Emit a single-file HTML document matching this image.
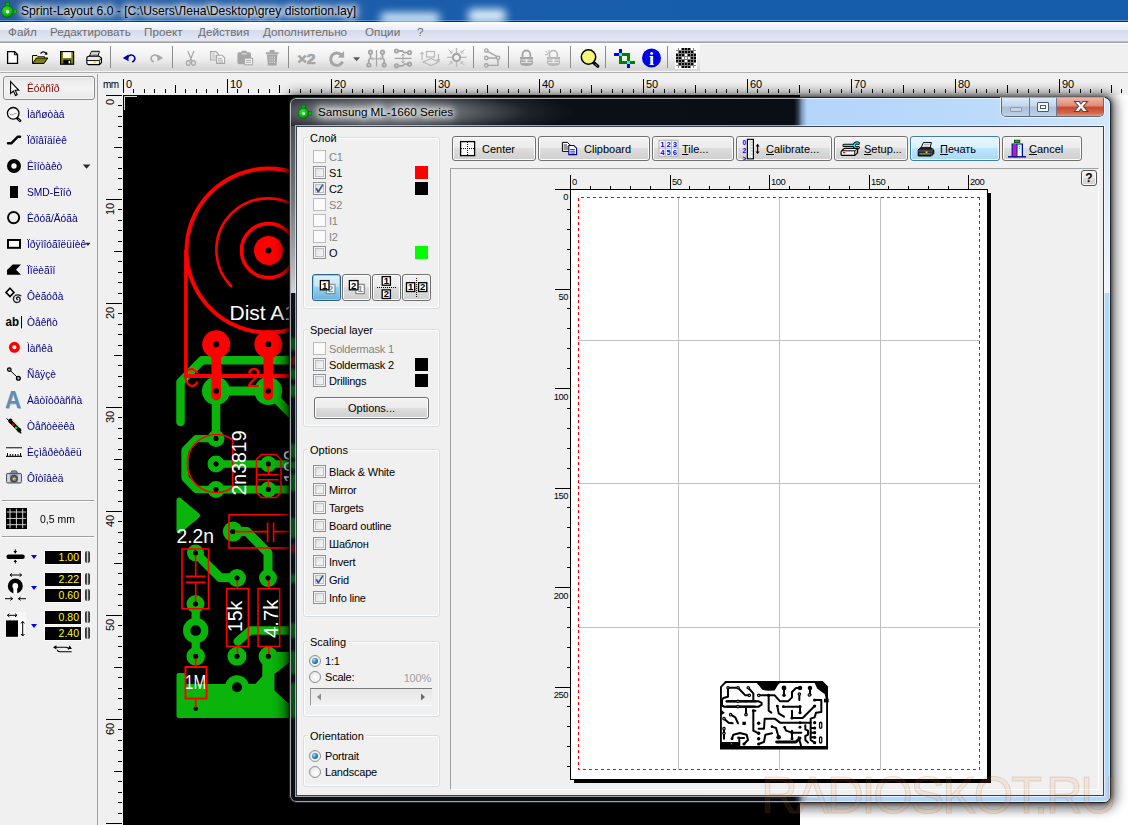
<!DOCTYPE html>
<html lang="ru">
<head>
<meta charset="utf-8">
<title>Sprint-Layout 6.0</title>
<style>
*{box-sizing:border-box;margin:0;padding:0}
html,body{width:1128px;height:825px;overflow:hidden;background:#f0f0f0}
body{position:relative;font-family:"Liberation Sans",sans-serif;font-size:11px;color:#000}
.abs{position:absolute}
.t{position:absolute;white-space:nowrap;line-height:14px}
svg{position:absolute;overflow:visible}
/* title */
#title{left:0;top:0;width:1128px;height:22px;background:linear-gradient(90deg,#2a5c9f 0,#1d5dab 30%,#165eab 60%,#165eab 100%);border-bottom:1px solid #0c2c55;box-shadow:inset 0 -1px 0 #4d8fd2}
#title .cap{left:21px;top:3px;font-size:12.15px;line-height:17px;color:#000;text-shadow:0 0 5px #fff,0 0 7px #fff,0 0 9px #fff,0 0 12px rgba(255,255,255,.9),0 0 15px rgba(255,255,255,.8)}
#menu{left:0;top:22px;width:1128px;height:21px;background:linear-gradient(#ffffff 0,#f3f5fb 15%,#eceff8 36%,#d4daec 37%,#e4e8f4 88%,#b8bcd0 90%,#b8bcd0 93%,#fff 94%,#fff 95%,#a0a0a0 96%)}
#menu .t{top:2px;font-size:11.7px;line-height:16px;color:#6d6d6d}
#tb{left:0;top:43px;width:1128px;height:30px;background:linear-gradient(#fff 0,#fcfcfc 4%,#f0f0f0 50%,#d4d4d4 91%,#e8e8e8 93%,#f4f4f4 95%,#a0a0a0 96%,#a0a0a0 98%,#fafafa 100%)}
.sep{position:absolute;top:48px;width:2px;height:21px;border-left:1px solid #a0a0a0;border-right:1px solid #fff}
#left{left:0;top:74px;width:98px;height:751px;background:#f0f0f0;border-right:1px solid #a0a0a0}
.tool{position:absolute;left:27px;color:#000080;font-size:11px;line-height:14px;white-space:nowrap;transform:scaleX(.93);transform-origin:0 0}
.val{position:absolute;left:44px;width:38px;height:15px;background:#000;color:#ffff00;font-size:10.5px;line-height:13px;text-align:right;padding-right:2px;border:1px solid #fafafa}
.grip{position:absolute;left:85px;width:5px;height:12px;border-radius:2px;background:linear-gradient(90deg,#222 0,#555 30%,#ccc 50%,#555 70%,#222 100%);filter:blur(.4px)}
.tri{position:absolute;width:0;height:0;border-left:3.7px solid transparent;border-right:3.7px solid transparent;border-top:4.3px solid #0000ff}
/* dialog */
.cb{position:absolute;width:13px;height:13px;border:1px solid #8e8f8f;background:linear-gradient(135deg,#d4d7db 0,#eceef0 55%,#fbfbfb 100%);box-shadow:inset 0 0 0 1px #f4f4f4,inset 0 0 0 2px #bcc0c6}
.cb.dis{border-color:#bcbcbc;background:#fafafa;box-shadow:none}
.cb i{position:absolute;left:1px;top:-3px;font-style:normal;font-size:12px;line-height:14px;color:#2b3a8c;font-weight:bold}
.dl{position:absolute;white-space:nowrap;font-size:11px;line-height:14px;color:#000;letter-spacing:-0.2px}
.dl.g{color:#838383}
.grp{position:absolute;border:1px solid #d5dfe5;border-radius:3px;box-shadow:inset 0 0 0 1px #fff}
.gl{position:absolute;background:#f0f0f0;padding:0 2px;font-size:11px;line-height:14px;white-space:nowrap}
.btn{position:absolute;border:1px solid #707070;border-radius:3px;background:linear-gradient(#f2f2f2 0,#ebebeb 49%,#dddddd 50%,#cfcfcf 100%);box-shadow:inset 0 0 0 1px #fcfcfc;font-size:11px}
.btn.hot{border-color:#3c7fb1;background:linear-gradient(#eaf6fd 0,#d9f0fc 49%,#bee6fd 50%,#a7d9f5 100%);box-shadow:inset 0 0 0 1px #fafdfe}
.btn.prs{border-color:#2c628b;background:linear-gradient(#e0f1fa 0,#c4e5f6 45%,#98d1ef 50%,#68b3db 100%);box-shadow:inset 0 0 0 1px #9ec9e4}
.btn .t{top:5px}
.sw{position:absolute;width:13px;height:13px}
.rd{position:absolute;width:12px;height:12px;border-radius:50%;border:1px solid #8e8f8f;background:radial-gradient(circle at 60% 60%,#fff 0,#ececec 60%,#d6d6d6 100%)}
.rd.on::after{content:"";position:absolute;left:2px;top:2px;width:6px;height:6px;border-radius:50%;background:radial-gradient(circle at 35% 35%,#9fe0ff 0,#1a78b8 55%,#0b3f77 100%)}
u{text-decoration:underline}
</style>
</head>
<body>
<div class="abs" style="left:123px;top:95px;width:1005px;height:730px;background:#fff"></div>
<div class="abs" id="canvas" style="left:123px;top:95px;width:677px;height:730px;background:#000"></div>
<div class="abs" id="title">
<div class="abs" style="left:380px;top:13px;width:60px;height:10px;background:#dff2ff;filter:blur(4px);border-radius:5px"></div>
<div class="abs" style="left:468px;top:9px;width:38px;height:14px;background:#d8ecfa;filter:blur(4px);border-radius:5px"></div>
<svg style="left:0;top:0" width="330" height="125" viewBox="0 0 330 125"><defs><radialGradient id="gb7" cx="40%" cy="35%" r="70%"><stop offset="0" stop-color="#35e035"/><stop offset=".6" stop-color="#0bbd0b"/><stop offset="1" stop-color="#067806"/></radialGradient></defs><rect x="5.3" y="2.2" width="4.2" height="5.0" fill="#08b008" stroke="#056a05" stroke-width=".6"/><rect x="12.0" y="9.3" width="4.6" height="4.4" fill="#08b008" stroke="#056a05" stroke-width=".6"/><circle cx="7.4" cy="11.6" r="5.9" fill="url(#gb7)" stroke="#056005" stroke-width=".7"/><circle cx="7.6" cy="11.8" r="1.7" fill="#fff"/></svg>
<div class="t cap">Sprint-Layout 6.0 - [C:\Users\Лена\Desktop\grey distortion.lay]</div>
</div>
<div class="abs" id="menu">
<div class="t" style="left:8px">Файл</div>
<div class="t" style="left:50px">Редактировать</div>
<div class="t" style="left:144px">Проект</div>
<div class="t" style="left:198px">Действия</div>
<div class="t" style="left:263px">Дополнительно</div>
<div class="t" style="left:365px">Опции</div>
<div class="t" style="left:417px">?</div>
</div>
<div class="abs" id="tb"></div><div class="abs" style="left:700px;top:44px;width:428px;height:27px;background:#f0f0f0"></div>
<svg style="left:0;top:0" width="720" height="75" viewBox="0 0 720 75">
<rect x="110" y="46" width="1" height="22" fill="#8c8c8c" shape-rendering="crispEdges"/>
<rect x="172" y="46" width="1" height="22" fill="#8c8c8c" shape-rendering="crispEdges"/>
<rect x="288" y="46" width="1" height="22" fill="#8c8c8c" shape-rendering="crispEdges"/>
<rect x="473" y="46" width="1" height="22" fill="#8c8c8c" shape-rendering="crispEdges"/>
<rect x="508" y="46" width="1" height="22" fill="#8c8c8c" shape-rendering="crispEdges"/>
<rect x="570" y="46" width="1" height="22" fill="#8c8c8c" shape-rendering="crispEdges"/>
<rect x="605" y="46" width="1" height="22" fill="#8c8c8c" shape-rendering="crispEdges"/>
<rect x="667" y="46" width="1" height="22" fill="#8c8c8c" shape-rendering="crispEdges"/>
<path d="M7.6 51.6 H14.6 L17.5 54.6 V63.4 H7.6 Z" fill="#fff" stroke="#000" stroke-width="1.3"/><path d="M14.4 51.8 V54.8 H17.4" fill="none" stroke="#000" stroke-width="1"/>
<path d="M32.6 63.4 V55.5 H37 L38 56.8 H44.5 V58" fill="#ffff9a" stroke="#000" stroke-width="1"/>
<path d="M33 56 h4 l1 1.3 h6 v1 h-8 l-3 5z" fill="#f4f48a"/>
<path d="M32.6 63.5 L36.3 58 H47.8 L44 63.5 Z" fill="#808000" stroke="#000" stroke-width="1"/>
<path d="M40.5 53.5 Q43.5 50.5 46 53.3" fill="none" stroke="#000" stroke-width="1.2"/><path d="M44.3 54.6 L47.4 54.8 L47 51.8 Z" fill="#000"/>
<rect x="60.6" y="51.6" width="13" height="12.6" fill="#808000" stroke="#000" stroke-width="1.2"/>
<rect x="63" y="52.2" width="8.3" height="5.8" fill="#fff"/><rect x="63.3" y="59.8" width="7.6" height="4.4" fill="#000"/><rect x="68.6" y="60.8" width="1.5" height="2.6" fill="#fff"/>
<path d="M89.5 56 L91.5 51.3 H99.5 L98 56 Z" fill="#fff" stroke="#000" stroke-width="1"/><path d="M92 53 h6 M91.5 54.6 h6" stroke="#888" stroke-width=".8"/>
<path d="M86.8 58.5 Q86.8 56.5 89 56.3 H99 L101.5 58 V62.5 L99.5 64.6 H88.5 Q86.8 64.6 86.8 63 Z" fill="#e8e8e8" stroke="#000" stroke-width="1.1"/>
<path d="M87 60.5 H99 L101.5 58.5" fill="none" stroke="#000" stroke-width=".9"/><rect x="88" y="61.6" width="10" height="1.7" fill="#fff"/><rect x="93.5" y="61.5" width="2.8" height="1.3" fill="#e6d800"/><path d="M99.5 64.5 V60.5" stroke="#000" stroke-width=".8"/>
<path d="M127 58.4 C128.5 54.4 133 53.8 134.6 57 C135.6 59.4 134 61 132.2 62.2" fill="none" stroke="#0000a0" stroke-width="1.6"/><path d="M122.8 58 L128.4 54.6 L128.6 61.2 Z" fill="#0000a0"/>
<path d="M159 58.4 C157.5 54.4 153 53.8 151.4 57 C150.4 59.4 152 61 153.8 62.2" fill="none" stroke="#a8a8a8" stroke-width="1.6"/><path d="M163.2 58 L157.6 54.6 L157.4 61.2 Z" fill="#a8a8a8"/>
<g fill="none" stroke="#a6a6a6" stroke-width="1.2"><path d="M187.8 51 L192 61 M194 51 L189.8 61"/><ellipse cx="188.3" cy="63" rx="1.9" ry="2.3"/><ellipse cx="193.5" cy="63" rx="1.9" ry="2.3"/></g>
<g fill="#f4f4f4" stroke="#a6a6a6" stroke-width="1.1"><path d="M210.6 51.6 H216 L218.4 54 V60 H210.6 Z"/><path d="M216.6 55.2 H222 L224.6 57.8 V63.4 H216.6 Z"/></g><path d="M212 54 h3 M212 56 h4 M212 58 h4 M218 58.5 h4 M218 60.3 h5 M218 62 h5" stroke="#a6a6a6" stroke-width=".8"/>
<rect x="237.4" y="52.2" width="13.6" height="12" rx="1.8" fill="#a6a6a6"/><rect x="241.5" y="50.8" width="5.4" height="2.6" rx="1" fill="#a6a6a6"/><rect x="242" y="53.3" width="4.6" height="1" fill="#e8e8e8"/><rect x="244.6" y="58.2" width="8" height="6.6" fill="#f2f2f2" stroke="#a6a6a6" stroke-width="1"/><path d="M246 60.5 h5 M246 62.4 h5" stroke="#a6a6a6" stroke-width=".9"/>
<path d="M267 54.6 H277.4 L276.6 65.4 H267.8 Z" fill="#a6a6a6"/><rect x="265.8" y="52.2" width="12.6" height="2" fill="#a6a6a6"/><rect x="269.6" y="50" width="5" height="2.4" fill="#a6a6a6"/><path d="M270 56.5 V64 M272.2 56.5 V64 M274.4 56.5 V64" stroke="#e4e4e4" stroke-width=".9" stroke-dasharray="1.5 1"/>
<text x="297.5" y="63.8" font-family="Liberation Sans, sans-serif" font-weight="bold" font-size="14.5" fill="#a6a6a6" stroke="#a6a6a6" stroke-width=".7" textLength="18" lengthAdjust="spacingAndGlyphs">×2</text>
<path d="M341.5 55 A6.2 6.2 0 1 0 342.6 61.6" fill="none" stroke="#a6a6a6" stroke-width="3"/><path d="M337.8 57.6 L344.2 57.8 L344 51 Z" fill="#a6a6a6"/>
<path d="M353 57.2 H360.2 L356.6 61.2 Z" fill="#5a5a5a"/>
<g fill="none" stroke="#a6a6a6" stroke-width="1.8"><path d="M376.5 50 V66.5" stroke-width="1.3"/><path d="M370.5 53.6 V58 L368.8 60 V63.6 M382.5 53.6 V58 L384.2 60 V63.6"/><circle cx="370.5" cy="52.2" r="1.7"/><circle cx="368.8" cy="65" r="1.7"/><circle cx="382.5" cy="52.2" r="1.7"/><circle cx="384.2" cy="65" r="1.7"/><path d="M371.5 58.8 H381.5 M373 57.3 L371.5 58.8 L373 60.3 M380 57.3 L381.5 58.8 L380 60.3" stroke-width="1"/></g>
<g fill="none" stroke="#a6a6a6" stroke-width="1.8"><path d="M394.5 58.4 H411.5" stroke-width="1.3"/><path d="M398 51 H402.5 L404.3 52.6 H408 M398 65.8 H402.5 L404.3 64.2 H408"/><circle cx="396.5" cy="51" r="1.7"/><circle cx="409.5" cy="52.6" r="1.7"/><circle cx="396.5" cy="65.8" r="1.7"/><circle cx="409.5" cy="64.2" r="1.7"/><path d="M403 54 V63 M401.5 55.5 L403 54 L404.5 55.5 M401.5 61.5 L403 63 L404.5 61.5" stroke-width="1"/></g>
<g fill="none" stroke="#b8b8b8" stroke-width="1.2"><rect x="426.5" y="51.5" width="8" height="5.5"/><path d="M423 62 L431 58.5 L439 62 L431 65.5 Z"/><path d="M422 52.5 V60 M420.4 54.2 L422 52.5 L423.6 54.2 M438.5 54 V61 M437 59.3 L438.5 61 L440 59.3"/></g>
<g fill="none" stroke="#b8b8b8" stroke-width="1.2"><path d="M456.5 48 V67 M447 57.4 H466.5" stroke-width="1.4"/><path d="M448.5 49.5 L452 53 M452 50.5 V53 H449.5 M464.5 49.5 L461 53 M461 50.5 V53 H463.5 M448.5 65.3 L452 61.8 M452 64.3 V61.8 H449.5 M464.5 65.3 L461 61.8 M461 64.3 V61.8 H463.5" stroke-width="1"/></g><circle cx="456.5" cy="57.4" r="3.6" fill="#f4f4f4" stroke="#a6a6a6" stroke-width="2.2"/>
<g fill="none" stroke="#a6a6a6" stroke-width="1.4"><path d="M487.6 51.3 L497.5 56.8 M488 58 H496 M498 59.5 V65.4 H488"/><circle cx="486.3" cy="50.6" r="1.7"/><circle cx="486.3" cy="58" r="1.7"/><circle cx="486.3" cy="65.4" r="1.7"/><circle cx="498" cy="57.8" r="1.7"/></g>
<path d="M522.5 57 V54.5 A3.9 4 0 0 1 530.3 54.5 V57" fill="none" stroke="#a6a6a6" stroke-width="1.8"/><path d="M520 57 H533 V63 Q533 66 526.5 66 Q520 66 520 63 Z" fill="#a6a6a6"/><path d="M520.5 60 H532.5 M521 62.6 H532" stroke="#eee" stroke-width=".9"/><rect x="525.6" y="59" width="1.8" height="3.6" fill="#eee"/>
<path d="M549.5 57 V54.5 A3.9 4 0 0 1 557.3 54.5 V57" fill="none" stroke="#b8b8b8" stroke-width="1.6"/><path d="M547 57 H560 V63 Q560 66 553.5 66 Q547 66 547 63 Z" fill="#b8b8b8"/><path d="M547.5 60 H559.5 M548 62.6 H559" stroke="#f2f2f2" stroke-width=".9"/><rect x="552.6" y="59" width="1.8" height="3.6" fill="#f2f2f2"/><path d="M545.5 51 L548.5 54 M549 49.8 V53 M545 54.6 H548" stroke="#b8b8b8" stroke-width="1"/>
<path d="M593.5 62.5 L597.8 66.3" stroke="#000" stroke-width="3.2" stroke-linecap="round"/><circle cx="588.5" cy="57" r="7.2" fill="#f6f67a" stroke="#000" stroke-width="1.5"/><path d="M595.2 64 L597.6 66.2" stroke="#bbb" stroke-width=".8"/>
<g shape-rendering="crispEdges"><rect x="618.5" y="48.5" width="3" height="14" fill="#008000"/><rect x="614" y="53" width="16" height="3" fill="#008000"/><rect x="626.5" y="54" width="3" height="14" fill="#008000"/><rect x="619" y="61" width="15.5" height="3" fill="#008000"/>
<rect x="618.5" y="48.5" width="3" height="4.5" fill="#0000ff"/><rect x="614" y="53" width="4.5" height="3" fill="#0000ff"/><rect x="626.5" y="64" width="3" height="4" fill="#0000ff"/><rect x="618.5" y="53" width="3" height="3" fill="#00ffff"/><rect x="626.5" y="61" width="3" height="3" fill="#00ffff"/></g>
<circle cx="651.5" cy="58" r="9.5" fill="#0000e6"/><text x="651.5" y="65" text-anchor="middle" font-family="Liberation Serif, serif" font-weight="bold" font-size="18" fill="#fff">i</text>
<g shape-rendering="crispEdges"><rect x="675" y="47" width="22" height="22" fill="#fdfdfd"/><rect x="676" y="48" width="20" height="20" fill="#808080"/><rect x="676" y="48" width="2" height="2" fill="#fff"/><rect x="679" y="48" width="2" height="2" fill="#fff"/><rect x="682" y="48" width="2" height="2" fill="#000"/><rect x="685" y="48" width="2" height="2" fill="#000"/><rect x="688" y="48" width="2" height="2" fill="#000"/><rect x="691" y="48" width="2" height="2" fill="#fff"/><rect x="694" y="48" width="2" height="2" fill="#fff"/><rect x="676" y="51" width="2" height="2" fill="#fff"/><rect x="679" y="51" width="2" height="2" fill="#000"/><rect x="682" y="51" width="2" height="2" fill="#000"/><rect x="685" y="51" width="2" height="2" fill="#000"/><rect x="688" y="51" width="2" height="2" fill="#000"/><rect x="691" y="51" width="2" height="2" fill="#000"/><rect x="694" y="51" width="2" height="2" fill="#fff"/><rect x="676" y="54" width="2" height="2" fill="#000"/><rect x="679" y="54" width="2" height="2" fill="#000"/><rect x="682" y="54" width="2" height="2" fill="#000"/><rect x="685" y="54" width="2" height="2" fill="#fff"/><rect x="688" y="54" width="2" height="2" fill="#000"/><rect x="691" y="54" width="2" height="2" fill="#000"/><rect x="694" y="54" width="2" height="2" fill="#000"/><rect x="676" y="57" width="2" height="2" fill="#000"/><rect x="679" y="57" width="2" height="2" fill="#000"/><rect x="682" y="57" width="2" height="2" fill="#fff"/><rect x="685" y="57" width="2" height="2" fill="#fff"/><rect x="688" y="57" width="2" height="2" fill="#fff"/><rect x="691" y="57" width="2" height="2" fill="#000"/><rect x="694" y="57" width="2" height="2" fill="#000"/><rect x="676" y="60" width="2" height="2" fill="#000"/><rect x="679" y="60" width="2" height="2" fill="#000"/><rect x="682" y="60" width="2" height="2" fill="#000"/><rect x="685" y="60" width="2" height="2" fill="#fff"/><rect x="688" y="60" width="2" height="2" fill="#000"/><rect x="691" y="60" width="2" height="2" fill="#000"/><rect x="694" y="60" width="2" height="2" fill="#000"/><rect x="676" y="63" width="2" height="2" fill="#fff"/><rect x="679" y="63" width="2" height="2" fill="#000"/><rect x="682" y="63" width="2" height="2" fill="#000"/><rect x="685" y="63" width="2" height="2" fill="#000"/><rect x="688" y="63" width="2" height="2" fill="#000"/><rect x="691" y="63" width="2" height="2" fill="#000"/><rect x="694" y="63" width="2" height="2" fill="#fff"/><rect x="676" y="66" width="2" height="2" fill="#fff"/><rect x="679" y="66" width="2" height="2" fill="#fff"/><rect x="682" y="66" width="2" height="2" fill="#000"/><rect x="685" y="66" width="2" height="2" fill="#000"/><rect x="688" y="66" width="2" height="2" fill="#000"/><rect x="691" y="66" width="2" height="2" fill="#fff"/><rect x="694" y="66" width="2" height="2" fill="#fff"/></g>
</svg>

<div class="abs" id="left"></div>
<div class="abs" style="left:3px;top:76px;width:92px;height:24px;border:1px solid #8b8b8b;border-radius:3px;background:linear-gradient(#dedede 0,#ececec 18%,#f3f3f3 50%,#e9e9e9 100%);box-shadow:inset 0 0 0 1px #f8f8f8"></div>
<div class="tool" style="top:81px;color:#800000">Êóðñîð</div>
<div class="tool" style="top:107px">Ìàñøòàá</div>
<div class="tool" style="top:133px">Ïðîâîäíèê</div>
<div class="tool" style="top:159px">Êîíòàêò</div>
<div class="tool" style="top:185px">SMD-Êîíò</div>
<div class="tool" style="top:211px">Êðóã/Äóãà</div>
<div class="tool" style="top:237px">Ïðÿìîóãîëüíèê</div>
<div class="tool" style="top:263px">Ïîëèãîí</div>
<div class="tool" style="top:289px">Ôèãóðà</div>
<div class="tool" style="top:315px">Òåêñò</div>
<div class="tool" style="top:341px">Ìàñêà</div>
<div class="tool" style="top:367px">Ñâÿçè</div>
<div class="tool" style="top:393px">Àâòîòðàññà</div>
<div class="tool" style="top:419px">Òåñòèëêà</div>
<div class="tool" style="top:445px">Èçìåðèòåëü</div>
<div class="tool" style="top:471px">Ôîòîâèä</div>
<svg style="left:0;top:0" width="98" height="700" viewBox="0 0 98 700">
<path d="M10.6 81.6 V93.6 L13.4 91 L15.5 95.6 L17.2 94.8 L15.2 90.3 H18.8 Z" fill="#fff" stroke="#000" stroke-width="1.1" stroke-linejoin="miter"/>
<path d="M16.5 117.5 L20 120.8" stroke="#000" stroke-width="2.6" stroke-linecap="round"/><circle cx="13.2" cy="113.3" r="5.8" fill="#fafafa" stroke="#000" stroke-width="1.3"/><path d="M9.5 113.5 Q11 116 13 114.6 Q15 113 16.8 113.6" fill="none" stroke="#999" stroke-width=".9"/><path d="M18.2 119 L19.8 120.6" stroke="#fff" stroke-width=".8"/>
<path d="M8 143.3 H11.3 L17.6 136.8 H20" fill="none" stroke="#000" stroke-width="2.4" stroke-linecap="round" stroke-linejoin="round"/>
<circle cx="14" cy="166" r="4.85" fill="#fff" stroke="#000" stroke-width="4.3"/>
<path d="M82.8 164.4 H90.4 L86.6 168.7 Z" fill="#2a2a2a"/>
<rect x="10" y="186" width="8" height="12" fill="#000"/>
<circle cx="13.6" cy="217.6" r="5.6" fill="none" stroke="#000" stroke-width="1.9"/>
<rect x="8" y="240" width="12" height="7.8" fill="#fff" stroke="#000" stroke-width="2"/>
<path d="M85.3 242.7 H90.5 L87.9 246 Z" fill="#2a2a2a"/>
<path d="M7 274.7 V270 L12.7 264.4 H21 L16 269.8 L21 274.7 Z" fill="#000"/>
<path d="M10 288.2 L14 292.4 L10 296.6 L6 292.4 Z" fill="#fff" stroke="#000" stroke-width="1.6"/>
<path d="M17.6 299.6 q-1.6 -.2 -1 -1.8 q1.4 -1.6 3 0 q1.6 2.4 -.8 4.2 q-3.2 1.4 -5 -1.4 q-1.4 -3.6 2 -5.4 q3 -1 5 .6" fill="none" stroke="#1a1a2a" stroke-width="1.3" stroke-linecap="round"/>
<text x="5.6" y="326.4" font-family="Liberation Sans, sans-serif" font-weight="bold" font-size="13" fill="#000" textLength="13.5" lengthAdjust="spacingAndGlyphs">ab</text><rect x="21" y="316" width="1" height="12.4" fill="#000"/>
<circle cx="14.4" cy="347.3" r="3.8" fill="#fff" stroke="#ff0000" stroke-width="3.5"/>
<path d="M9.3 369.6 L18.4 378.3" stroke="#000" stroke-width="1"/><circle cx="9.3" cy="369.6" r="1.8" fill="#aaa" stroke="#000" stroke-width="1.2"/><circle cx="18.4" cy="378.3" r="1.9" fill="#aaa" stroke="#000" stroke-width="1.3"/>
<text x="5.4" y="408.6" font-family="Liberation Sans, sans-serif" font-weight="bold" font-size="23" fill="#9ab" opacity=".7" textLength="16.6" lengthAdjust="spacingAndGlyphs">A</text>
<text x="5" y="408" font-family="Liberation Sans, sans-serif" font-weight="bold" font-size="23" fill="#5b8fb8" textLength="16" lengthAdjust="spacingAndGlyphs">A</text>
<path d="M6.5 418.5 L10 421.5" stroke="#000" stroke-width="1"/><path d="M10.5 421 L19 430" stroke="#000" stroke-width="4.6" stroke-linecap="round"/><path d="M11 421.5 L18.6 429.6" stroke="#fff" stroke-width="1" opacity=".0"/><path d="M19 430 L21 433.4" stroke="#000" stroke-width="1.4"/><path d="M9.4 423.4 L17.2 431.6 M12.2 420.2 L20 428.2" stroke="#f4f4f4" stroke-width="1" opacity=".9"/><circle cx="13" cy="424.7" r="1.4" fill="#f00"/><circle cx="16" cy="427.8" r="1.4" fill="#1d1"/>
<rect x="6" y="447.6" width="16" height="9" fill="#fff"/><rect x="6" y="447.3" width="16" height="1" fill="#000"/><rect x="6" y="455.8" width="16" height="1.1" fill="#000"/><path d="M7.5 453 V456 M10.2 454 V456 M12.8 454 V456 M15.4 454 V456 M18 454 V456 M20.6 453 V456" stroke="#000" stroke-width="1"/>
<rect x="6.5" y="473.4" width="15" height="9.6" rx="1.4" fill="#9aa2b0" stroke="#4d5563" stroke-width="1"/><path d="M10.5 473.4 L11.8 470.9 H16.4 L17.6 473.4 Z" fill="#8c93a0" stroke="#4d5563" stroke-width=".9"/><rect x="7.2" y="474.5" width="2.6" height="7.6" fill="#d5d9df"/><rect x="18.2" y="474.5" width="2.6" height="7.6" fill="#d5d9df"/><circle cx="14" cy="478.6" r="3.4" fill="#5a6270" stroke="#333a46" stroke-width="1"/><circle cx="14.2" cy="479" r="1.6" fill="#d9c08a"/><circle cx="15" cy="480" r="0.9" fill="#c06a20"/>
<rect x="6" y="508" width="21" height="21" fill="#000"/><path d="M10 508.8 V528.2 M16.4 508.8 V528.2 M22.7 508.8 V528.2 M6.8 512 H26.2 M6.8 518.4 H26.2 M6.8 524.7 H26.2" stroke="#d0d0d0" stroke-width="1"/>
<rect x="6.4" y="554.4" width="18.4" height="4.6" rx="2.3" fill="#000"/><path d="M15.3 549.4 V553.2 M15.3 560.2 V563.4" stroke="#000" stroke-width="1"/><path d="M13.4 551 H17.2 L15.3 553.4 Z M13.4 562 H17.2 L15.3 559.8 Z" fill="#000"/>
<rect x="8.5" y="572" width="14" height="28" fill="#fafafa" opacity=".0"/><circle cx="15.3" cy="586" r="5.2" fill="#fff" stroke="#000" stroke-width="4.6"/><rect x="13.4" y="586" width="3.8" height="8" fill="#fff"/><rect x="14.2" y="589" width="2.2" height="4" fill="#000" opacity=".0"/>
<path d="M10 575 H21.6 M10 575 L12 573.4 M10 575 L12 576.6 M21.6 575 L19.6 573.4 M21.6 575 L19.6 576.6" stroke="#000" stroke-width="1" fill="none"/>
<path d="M5 598.7 H12.4 M12.6 598.7 L10.4 597 M12.6 598.7 L10.4 600.4 M18.6 598.7 H26 M18.4 598.7 L20.6 597 M18.4 598.7 L20.6 600.4" stroke="#000" stroke-width="1" fill="none"/>
<rect x="6" y="612" width="20" height="26" fill="#f8f8f8"/><rect x="6" y="620.4" width="12" height="16.4" fill="#000"/>
<path d="M7.4 615.3 H17 M7.4 615.3 L9.4 613.7 M7.4 615.3 L9.4 616.9 M17 615.3 L15 613.7 M17 615.3 L15 616.9" stroke="#000" stroke-width="1" fill="none"/>
<path d="M22.7 621.4 V636 M22.7 621.4 L21 623.4 M22.7 621.4 L24.4 623.4 M22.7 636 L21 634 M22.7 636 L24.4 634" stroke="#000" stroke-width="1" fill="none"/>
<path d="M55 647.3 H66 Q68.6 647.3 68.6 649.5 M71.6 651.7 H60 Q57.4 651.7 57.4 649.8" stroke="#000" stroke-width="1.1" fill="none"/><path d="M53 647.3 L56.4 645.2 V649.4 Z M69.8 645.6 L71.9 649 H67.7 Z" fill="#000"/>
</svg>

<div class="abs" style="left:2px;top:500px;width:92px;height:2px;border-top:1px solid #a0a0a0;border-bottom:1px solid #fff"></div>
<div class="abs" style="left:2px;top:536px;width:92px;height:2px;border-top:1px solid #a0a0a0;border-bottom:1px solid #fff"></div>
<div class="t" style="left:40px;top:512px;font-size:11px;transform:scaleX(.95);transform-origin:0 0">0,5 mm</div>
<div class="val" style="top:550px">1.00</div><div class="grip" style="top:551px"></div>
<div class="val" style="top:572px">2.22</div><div class="grip" style="top:573px"></div>
<div class="val" style="top:588px">0.60</div><div class="grip" style="top:589px"></div>
<div class="val" style="top:610px">0.80</div><div class="grip" style="top:611px"></div>
<div class="val" style="top:626px">2.40</div><div class="grip" style="top:627px"></div>
<div class="tri" style="left:31px;top:555px"></div>
<div class="tri" style="left:31px;top:586px"></div>
<div class="tri" style="left:31px;top:624px"></div>
<div class="abs" style="left:99px;top:74px;width:1029px;height:21px;background:#f0f0f0"></div>
<div class="abs" style="left:99px;top:95px;width:24px;height:730px;background:#f0f0f0"></div>
<div class="t" style="left:103px;top:78px;font-size:10px;letter-spacing:-.6px;color:#000">mm</div>
<svg style="left:0;top:0" width="1128" height="825" viewBox="0 0 1128 825" shape-rendering="crispEdges"><rect x="123" y="79" width="1" height="14" fill="#000"/><rect x="133" y="89" width="1" height="4" fill="#000"/><rect x="144" y="89" width="1" height="4" fill="#000"/><rect x="154" y="89" width="1" height="4" fill="#000"/><rect x="165" y="89" width="1" height="4" fill="#000"/><rect x="175" y="85" width="1" height="8" fill="#000"/><rect x="185" y="89" width="1" height="4" fill="#000"/><rect x="196" y="89" width="1" height="4" fill="#000"/><rect x="206" y="89" width="1" height="4" fill="#000"/><rect x="217" y="89" width="1" height="4" fill="#000"/><rect x="227" y="79" width="1" height="14" fill="#000"/><rect x="237" y="89" width="1" height="4" fill="#000"/><rect x="248" y="89" width="1" height="4" fill="#000"/><rect x="258" y="89" width="1" height="4" fill="#000"/><rect x="269" y="89" width="1" height="4" fill="#000"/><rect x="279" y="85" width="1" height="8" fill="#000"/><rect x="289" y="89" width="1" height="4" fill="#000"/><rect x="300" y="89" width="1" height="4" fill="#000"/><rect x="310" y="89" width="1" height="4" fill="#000"/><rect x="321" y="89" width="1" height="4" fill="#000"/><rect x="331" y="79" width="1" height="14" fill="#000"/><rect x="341" y="89" width="1" height="4" fill="#000"/><rect x="352" y="89" width="1" height="4" fill="#000"/><rect x="362" y="89" width="1" height="4" fill="#000"/><rect x="373" y="89" width="1" height="4" fill="#000"/><rect x="383" y="85" width="1" height="8" fill="#000"/><rect x="393" y="89" width="1" height="4" fill="#000"/><rect x="404" y="89" width="1" height="4" fill="#000"/><rect x="414" y="89" width="1" height="4" fill="#000"/><rect x="425" y="89" width="1" height="4" fill="#000"/><rect x="435" y="79" width="1" height="14" fill="#000"/><rect x="445" y="89" width="1" height="4" fill="#000"/><rect x="456" y="89" width="1" height="4" fill="#000"/><rect x="466" y="89" width="1" height="4" fill="#000"/><rect x="477" y="89" width="1" height="4" fill="#000"/><rect x="487" y="85" width="1" height="8" fill="#000"/><rect x="497" y="89" width="1" height="4" fill="#000"/><rect x="508" y="89" width="1" height="4" fill="#000"/><rect x="518" y="89" width="1" height="4" fill="#000"/><rect x="529" y="89" width="1" height="4" fill="#000"/><rect x="539" y="79" width="1" height="14" fill="#000"/><rect x="549" y="89" width="1" height="4" fill="#000"/><rect x="560" y="89" width="1" height="4" fill="#000"/><rect x="570" y="89" width="1" height="4" fill="#000"/><rect x="581" y="89" width="1" height="4" fill="#000"/><rect x="591" y="85" width="1" height="8" fill="#000"/><rect x="601" y="89" width="1" height="4" fill="#000"/><rect x="612" y="89" width="1" height="4" fill="#000"/><rect x="622" y="89" width="1" height="4" fill="#000"/><rect x="633" y="89" width="1" height="4" fill="#000"/><rect x="643" y="79" width="1" height="14" fill="#000"/><rect x="653" y="89" width="1" height="4" fill="#000"/><rect x="664" y="89" width="1" height="4" fill="#000"/><rect x="674" y="89" width="1" height="4" fill="#000"/><rect x="685" y="89" width="1" height="4" fill="#000"/><rect x="695" y="85" width="1" height="8" fill="#000"/><rect x="705" y="89" width="1" height="4" fill="#000"/><rect x="716" y="89" width="1" height="4" fill="#000"/><rect x="726" y="89" width="1" height="4" fill="#000"/><rect x="737" y="89" width="1" height="4" fill="#000"/><rect x="747" y="79" width="1" height="14" fill="#000"/><rect x="757" y="89" width="1" height="4" fill="#000"/><rect x="768" y="89" width="1" height="4" fill="#000"/><rect x="778" y="89" width="1" height="4" fill="#000"/><rect x="789" y="89" width="1" height="4" fill="#000"/><rect x="799" y="85" width="1" height="8" fill="#000"/><rect x="809" y="89" width="1" height="4" fill="#000"/><rect x="820" y="89" width="1" height="4" fill="#000"/><rect x="830" y="89" width="1" height="4" fill="#000"/><rect x="841" y="89" width="1" height="4" fill="#000"/><rect x="851" y="79" width="1" height="14" fill="#000"/><rect x="861" y="89" width="1" height="4" fill="#000"/><rect x="872" y="89" width="1" height="4" fill="#000"/><rect x="882" y="89" width="1" height="4" fill="#000"/><rect x="893" y="89" width="1" height="4" fill="#000"/><rect x="903" y="85" width="1" height="8" fill="#000"/><rect x="913" y="89" width="1" height="4" fill="#000"/><rect x="924" y="89" width="1" height="4" fill="#000"/><rect x="934" y="89" width="1" height="4" fill="#000"/><rect x="945" y="89" width="1" height="4" fill="#000"/><rect x="955" y="79" width="1" height="14" fill="#000"/><rect x="965" y="89" width="1" height="4" fill="#000"/><rect x="976" y="89" width="1" height="4" fill="#000"/><rect x="986" y="89" width="1" height="4" fill="#000"/><rect x="997" y="89" width="1" height="4" fill="#000"/><rect x="1007" y="85" width="1" height="8" fill="#000"/><rect x="1017" y="89" width="1" height="4" fill="#000"/><rect x="1028" y="89" width="1" height="4" fill="#000"/><rect x="1038" y="89" width="1" height="4" fill="#000"/><rect x="1049" y="89" width="1" height="4" fill="#000"/><rect x="1059" y="79" width="1" height="14" fill="#000"/><rect x="1069" y="89" width="1" height="4" fill="#000"/><rect x="1080" y="89" width="1" height="4" fill="#000"/><rect x="1090" y="89" width="1" height="4" fill="#000"/><rect x="1101" y="89" width="1" height="4" fill="#000"/><rect x="1111" y="85" width="1" height="8" fill="#000"/><rect x="1121" y="89" width="1" height="4" fill="#000"/><rect x="106" y="95" width="16" height="1" fill="#000"/><rect x="118" y="105" width="4" height="1" fill="#000"/><rect x="118" y="116" width="4" height="1" fill="#000"/><rect x="118" y="126" width="4" height="1" fill="#000"/><rect x="118" y="137" width="4" height="1" fill="#000"/><rect x="114" y="147" width="8" height="1" fill="#000"/><rect x="118" y="157" width="4" height="1" fill="#000"/><rect x="118" y="168" width="4" height="1" fill="#000"/><rect x="118" y="178" width="4" height="1" fill="#000"/><rect x="118" y="189" width="4" height="1" fill="#000"/><rect x="106" y="199" width="16" height="1" fill="#000"/><rect x="118" y="209" width="4" height="1" fill="#000"/><rect x="118" y="220" width="4" height="1" fill="#000"/><rect x="118" y="230" width="4" height="1" fill="#000"/><rect x="118" y="241" width="4" height="1" fill="#000"/><rect x="114" y="251" width="8" height="1" fill="#000"/><rect x="118" y="261" width="4" height="1" fill="#000"/><rect x="118" y="272" width="4" height="1" fill="#000"/><rect x="118" y="282" width="4" height="1" fill="#000"/><rect x="118" y="293" width="4" height="1" fill="#000"/><rect x="106" y="303" width="16" height="1" fill="#000"/><rect x="118" y="313" width="4" height="1" fill="#000"/><rect x="118" y="324" width="4" height="1" fill="#000"/><rect x="118" y="334" width="4" height="1" fill="#000"/><rect x="118" y="345" width="4" height="1" fill="#000"/><rect x="114" y="355" width="8" height="1" fill="#000"/><rect x="118" y="365" width="4" height="1" fill="#000"/><rect x="118" y="376" width="4" height="1" fill="#000"/><rect x="118" y="386" width="4" height="1" fill="#000"/><rect x="118" y="397" width="4" height="1" fill="#000"/><rect x="106" y="407" width="16" height="1" fill="#000"/><rect x="118" y="417" width="4" height="1" fill="#000"/><rect x="118" y="428" width="4" height="1" fill="#000"/><rect x="118" y="438" width="4" height="1" fill="#000"/><rect x="118" y="449" width="4" height="1" fill="#000"/><rect x="114" y="459" width="8" height="1" fill="#000"/><rect x="118" y="469" width="4" height="1" fill="#000"/><rect x="118" y="480" width="4" height="1" fill="#000"/><rect x="118" y="490" width="4" height="1" fill="#000"/><rect x="118" y="501" width="4" height="1" fill="#000"/><rect x="106" y="511" width="16" height="1" fill="#000"/><rect x="118" y="521" width="4" height="1" fill="#000"/><rect x="118" y="532" width="4" height="1" fill="#000"/><rect x="118" y="542" width="4" height="1" fill="#000"/><rect x="118" y="553" width="4" height="1" fill="#000"/><rect x="114" y="563" width="8" height="1" fill="#000"/><rect x="118" y="573" width="4" height="1" fill="#000"/><rect x="118" y="584" width="4" height="1" fill="#000"/><rect x="118" y="594" width="4" height="1" fill="#000"/><rect x="118" y="605" width="4" height="1" fill="#000"/><rect x="106" y="615" width="16" height="1" fill="#000"/><rect x="118" y="625" width="4" height="1" fill="#000"/><rect x="118" y="636" width="4" height="1" fill="#000"/><rect x="118" y="646" width="4" height="1" fill="#000"/><rect x="118" y="657" width="4" height="1" fill="#000"/><rect x="114" y="667" width="8" height="1" fill="#000"/><rect x="118" y="677" width="4" height="1" fill="#000"/><rect x="118" y="688" width="4" height="1" fill="#000"/><rect x="118" y="698" width="4" height="1" fill="#000"/><rect x="118" y="709" width="4" height="1" fill="#000"/><rect x="106" y="719" width="16" height="1" fill="#000"/><rect x="118" y="729" width="4" height="1" fill="#000"/><rect x="118" y="740" width="4" height="1" fill="#000"/><rect x="118" y="750" width="4" height="1" fill="#000"/><rect x="118" y="761" width="4" height="1" fill="#000"/><rect x="114" y="771" width="8" height="1" fill="#000"/><rect x="118" y="781" width="4" height="1" fill="#000"/><rect x="118" y="792" width="4" height="1" fill="#000"/><rect x="118" y="802" width="4" height="1" fill="#000"/><rect x="118" y="813" width="4" height="1" fill="#000"/><rect x="106" y="823" width="16" height="1" fill="#000"/></svg>
<div class="t" style="left:126px;top:77px;font-size:11px">0</div>
<div class="t" style="left:230px;top:77px;font-size:11px">10</div>
<div class="t" style="left:334px;top:77px;font-size:11px">20</div>
<div class="t" style="left:438px;top:77px;font-size:11px">30</div>
<div class="t" style="left:542px;top:77px;font-size:11px">40</div>
<div class="t" style="left:646px;top:77px;font-size:11px">50</div>
<div class="t" style="left:750px;top:77px;font-size:11px">60</div>
<div class="t" style="left:854px;top:77px;font-size:11px">70</div>
<div class="t" style="left:958px;top:77px;font-size:11px">80</div>
<div class="t" style="left:1062px;top:77px;font-size:11px">90</div>
<div class="t" style="left:103px;top:105px;font-size:11px;transform-origin:0 0;transform:rotate(-90deg)">0</div>
<div class="t" style="left:103px;top:215px;font-size:11px;transform-origin:0 0;transform:rotate(-90deg)">10</div>
<div class="t" style="left:103px;top:319px;font-size:11px;transform-origin:0 0;transform:rotate(-90deg)">20</div>
<div class="t" style="left:103px;top:423px;font-size:11px;transform-origin:0 0;transform:rotate(-90deg)">30</div>
<div class="t" style="left:103px;top:527px;font-size:11px;transform-origin:0 0;transform:rotate(-90deg)">40</div>
<div class="t" style="left:103px;top:631px;font-size:11px;transform-origin:0 0;transform:rotate(-90deg)">50</div>
<div class="t" style="left:103px;top:735px;font-size:11px;transform-origin:0 0;transform:rotate(-90deg)">60</div>
<svg style="left:0;top:0" width="1128" height="825" viewBox="0 0 1128 825">
<defs><clipPath id="cv"><rect x="123" y="95" width="172" height="730"/></clipPath></defs>
<g clip-path="url(#cv)">
<path d="M124.5 110 V96.5 H137" fill="none" stroke="#d8d8d8" stroke-width="1"/>
<g fill="none" stroke="#0ab40a" stroke-linecap="round" stroke-linejoin="round">
<path d="M300 360.3 H202 L180.5 382 V422" stroke-width="8.5"/>
<path d="M216 391 H268.3" stroke-width="9"/>
<path d="M216 391 V438.5" stroke-width="8.5"/>
<path d="M268.3 391 L300 423" stroke-width="8.5"/>
<path d="M216 438.7 H196 L185 450 V478 L196 489.5 H216" stroke-width="7.3"/>
<path d="M216 464 H300" stroke-width="7.3"/>
<path d="M216 489.5 H300" stroke-width="8"/>
<path d="M195.5 553 L220 577.5 L237 578" stroke-width="9"/>
<path d="M232.8 531.6 H247 L268 553 V578" stroke-width="9"/>
<path d="M195.7 604 V660" stroke-width="8.3"/>
<path d="M237.7 641.5 L250 630.6 H300" stroke-width="8.5"/>
</g>
<g fill="#0ab40a">
<path d="M179 500 L197.5 515.5 L179 531 Z" stroke="#0ab40a" stroke-width="5" stroke-linejoin="round"/>
<path d="M178.5 716 V675 H184 V686 H256 L264.3 677 V654 H300 L289 660 L273 673.3 V691.3 L286.3 703.3 L300 716 Z" stroke="#0ab40a" stroke-width="4" stroke-linejoin="round"/>
<path d="M264 652 H300 V660 H289 L273 673.3 V691.3 L286.3 703.3 H300 V718 H264 Z"/>
<circle cx="216" cy="391" r="14"/>
<circle cx="268.3" cy="391" r="14"/>
<circle cx="216" cy="438.5" r="8.5"/>
<circle cx="216" cy="464" r="8.5"/>
<circle cx="216" cy="489.5" r="8.5"/>
<circle cx="268.3" cy="464" r="8"/>
<circle cx="268.3" cy="489.5" r="8"/>
<circle cx="195.5" cy="553" r="8.5"/>
<circle cx="195.5" cy="604" r="9"/>
<circle cx="237" cy="578" r="9"/>
<circle cx="268" cy="578" r="9"/>
<circle cx="232.8" cy="531.6" r="10"/>
<circle cx="195.7" cy="630.4" r="12.7"/>
<circle cx="195.7" cy="656.3" r="9.3"/>
<circle cx="237" cy="656.3" r="9.5"/>
<circle cx="268.3" cy="656.3" r="9.7"/>
<circle cx="237" cy="687.3" r="12"/>
</g>
<path d="M300 662 H291 L274.5 674 V690.5 L288 703 H300 Z" fill="#000"/>
<g fill="#000">
<circle cx="216" cy="391" r="3"/>
<circle cx="268.3" cy="391" r="3"/>
<circle cx="216" cy="438.5" r="2.5"/>
<circle cx="216" cy="464" r="2.5"/>
<circle cx="216" cy="489.5" r="2.5"/>
<circle cx="268.3" cy="464" r="2.5"/>
<circle cx="268.3" cy="489.5" r="2.5"/>
<circle cx="195.5" cy="553" r="2.5"/>
<circle cx="195.5" cy="604" r="2.5"/>
<circle cx="237" cy="578" r="2.5"/>
<circle cx="268" cy="578" r="2.5"/>
<circle cx="232.8" cy="531.6" r="2.5"/>
<circle cx="195.7" cy="630.4" r="5.3"/>
<circle cx="195.7" cy="656.3" r="2.5"/>
<circle cx="237" cy="656.3" r="2.5"/>
<circle cx="268.3" cy="656.3" r="2.5"/>
<circle cx="237" cy="687.3" r="5"/>
<circle cx="195.7" cy="708.7" r="2.2"/>
</g>
<g fill="none" stroke="#ff0000">
<circle cx="268.5" cy="250.6" r="82" stroke-width="4"/>
<path d="M305 214 A51.5 51.5 0 1 0 231 286" stroke-width="2.6" stroke-linecap="round"/>
<circle cx="268.5" cy="250.6" r="27" stroke-width="3.6"/>
<path d="M185.9 250 V377" stroke-width="3.6"/><path d="M183.6 376 H300" stroke-width="4"/>
<path d="M216.2 344.3 V395.5 M268.3 344.3 V395.5" stroke-width="9.6" stroke-linecap="round"/>
<path d="M232.6 439.5 A29 29 0 1 0 232.6 487.5 Z" stroke-width="1.6"/>
<path d="M261.5 454.5 H276 L281 459.5 V492.5 L276 497.5 H261.5 L256.5 492.5 V459.5 Z" stroke-width="1.6"/>
<path d="M258 474.8 H278.6 M258 479.7 H278.6 M268.3 464 V474.8 M268.3 479.7 V489.5" stroke-width="1.6"/>
<rect x="182" y="549" width="26.5" height="59.8" stroke-width="1.6"/>
<path d="M185.8 576.4 H205.5 M185.8 582.4 H205.5 M195.7 553 V576.4 M195.7 582.4 V604" stroke-width="1.6"/>
<rect x="229" y="514.8" width="80" height="33.2" stroke-width="1.6"/>
<path d="M232.8 531.6 H267.6 M267.6 522.4 V542 M273.6 522.4 V542 M273.6 531.6 H300" stroke-width="1.6"/>
<rect x="226.6" y="588.5" width="21.7" height="57.9" stroke-width="1.5"/>
<rect x="258" y="588.5" width="21.7" height="57.9" stroke-width="1.5"/>
<path d="M237.4 578 V588.5 M237.4 646.4 V656.3 M268.8 578 V588.5 M268.8 646.4 V656.3" stroke-width="1.5"/>
<rect x="185.5" y="667" width="21" height="31.5" stroke-width="2"/>
<path d="M195.7 656.3 V667 M195.7 698.5 V708" stroke-width="1.8"/>
</g>
<g fill="#ff0000">
<circle cx="268.5" cy="250.6" r="14.5"/><circle cx="216.2" cy="344.3" r="14"/><circle cx="268.3" cy="344.3" r="14"/>
</g>
<g fill="#000"><circle cx="268.5" cy="250.6" r="3"/><circle cx="216.2" cy="344.3" r="3"/><circle cx="268.3" cy="344.3" r="3"/><circle cx="216.2" cy="391" r="2.8"/><circle cx="268.3" cy="391" r="2.8"/>
<circle cx="216" cy="438.5" r="2.4"/>
<circle cx="216" cy="464" r="2.4"/>
<circle cx="216" cy="489.5" r="2.4"/>
<circle cx="268.3" cy="464" r="2.4"/>
<circle cx="268.3" cy="489.5" r="2.4"/>
<circle cx="195.5" cy="553" r="2.4"/>
<circle cx="195.5" cy="604" r="2.4"/>
<circle cx="237" cy="578" r="2.4"/>
<circle cx="268" cy="578" r="2.4"/>
<circle cx="232.8" cy="531.6" r="2.4"/>
<circle cx="195.7" cy="656.3" r="2.4"/>
<circle cx="237" cy="656.3" r="2.4"/>
<circle cx="268.3" cy="656.3" r="2.4"/>
</g>
<g fill="#ff0000" font-family="Liberation Sans, sans-serif" font-size="28" font-weight="normal">
<text x="184" y="387" textLength="14.5" lengthAdjust="spacingAndGlyphs">C</text>
<text x="246.6" y="387" textLength="14" lengthAdjust="spacingAndGlyphs">2</text>
</g>
<g fill="#fff" font-family="Liberation Sans, sans-serif">
<text x="229.5" y="319.6" font-size="21">Dist A1</text>
<text x="176.5" y="543" font-size="20" textLength="37.5" lengthAdjust="spacingAndGlyphs">2.2n</text>
<text transform="translate(246,495.5) rotate(-90)" font-size="20" textLength="65" lengthAdjust="spacingAndGlyphs">2n3819</text>
<text transform="translate(298,483) rotate(-90)" font-size="20">100</text>
<text transform="translate(241.8,632) rotate(-90)" font-size="20" textLength="31" lengthAdjust="spacingAndGlyphs">15k</text>
<text transform="translate(278,638) rotate(-90)" font-size="20" textLength="38.5" lengthAdjust="spacingAndGlyphs">4.7k</text>
<text x="185" y="688.7" font-size="20" textLength="21" lengthAdjust="spacingAndGlyphs">1M</text>
</g>
</g></svg>
<div class="abs" style="left:290px;top:98px;width:820px;height:704px;border-radius:7px;box-shadow:0 0 5px 1px rgba(0,0,0,.85),0 1px 11px 7px rgba(0,0,0,.47)"></div>
<div class="abs" id="dlg" style="left:289px;top:97px;width:822px;height:706px;border-radius:7px;border:1px solid #20252c;overflow:hidden;background:linear-gradient(90deg,#0c1118 0,#0a0e15 504px,#2c3846 508px,#7f9dbd 512px,#b3d5fa 517px,#bcdbfb 700px,#d3e7fc 100%)">
<div class="abs" style="left:0;top:0;width:300px;height:28px;background:radial-gradient(ellipse 190px 26px at 95px 14px,rgba(190,195,200,.75) 0,rgba(150,155,160,.55) 45%,rgba(90,95,102,.25) 75%,rgba(10,14,21,0) 100%)"></div>
<div class="abs" style="left:517px;top:690px;width:305px;height:16px;background:#b4d6fa"></div>
<div class="abs" style="left:810px;top:28px;width:12px;height:167px;background:linear-gradient(#d4e6fb,#eef5fd)"></div>
<div class="abs" style="left:810px;top:195px;width:12px;height:511px;background:#b4d6fa"></div>
<div class="abs" style="left:1px;top:28px;width:6px;height:167px;background:linear-gradient(#4c5056 0,#74777c 45%,#a9abae 80%,#d2d3d4 100%)"></div>
<div class="abs" style="left:1px;top:195px;width:6px;height:505px;background:linear-gradient(#0b1016 0,#0b1016 43px,#0b4d18 47px,#0b4d18 55px,#0b1016 59px,#0b1016 62px,#4a1015 66px,#4a1015 70px,#0b1016 74px,#0b1016 74px,#0b4d18 78px,#0b4d18 84px,#0b1016 88px,#0b1016 90px,#0b4d18 94px,#0b4d18 102px,#0b1016 106px,#0b1016 149px,#0b4d18 153px,#0b4d18 163px,#0b1016 167px,#0b1016 166px,#0b4d18 170px,#0b4d18 174px,#0b1016 178px,#0b1016 179px,#0b4d18 183px,#0b4d18 196px,#0b1016 200px,#0b1016 223px,#0b4d18 227px,#0b4d18 243px,#0b1016 247px,#0b1016 249px,#4a1015 253px,#4a1015 258px,#0b1016 262px,#0b1016 279px,#0b4d18 283px,#0b4d18 288px,#0b1016 292px,#0b1016 328px,#0b4d18 332px,#0b4d18 343px,#0b1016 347px,#0b1016 356px,#0b4d18 360px,#0b4d18 379px,#0b1016 383px,#0b1016 388px,#0b4d18 392px,#0b4d18 423px,#0b1016 427px,#0b1016 100%);filter:blur(.6px)"></div>
<div class="abs" style="left:0;top:0;right:0;bottom:0;border:1px solid rgba(255,255,255,.62);border-radius:6px"></div>
</div>
<svg style="left:0;top:0" width="330" height="125" viewBox="0 0 330 125"><defs><radialGradient id="gb303" cx="40%" cy="35%" r="70%"><stop offset="0" stop-color="#35e035"/><stop offset=".6" stop-color="#0bbd0b"/><stop offset="1" stop-color="#067806"/></radialGradient></defs><rect x="301.6" y="105.0" width="3.7" height="4.4" fill="#08b008" stroke="#056a05" stroke-width=".6"/><rect x="307.6" y="111.3" width="4.1" height="3.9" fill="#08b008" stroke="#056a05" stroke-width=".6"/><circle cx="303.5" cy="113.3" r="5.2" fill="url(#gb303)" stroke="#056005" stroke-width=".7"/><circle cx="303.7" cy="113.5" r="1.5" fill="#fff"/></svg>
<div class="t" style="left:318px;top:104px;font-size:11.7px;line-height:16px;color:#000;text-shadow:0 0 5px #fff,0 0 7px #fff,0 0 9px #fff,0 0 12px #fff,0 0 14px #fff">Samsung ML-1660 Series</div>
<div class="abs" style="left:1001px;top:98px;width:103px;height:19px;border:1px solid #5a6a80;border-top:none;border-radius:0 0 5px 5px;overflow:hidden;box-shadow:0 0 0 1px rgba(255,255,255,.6)">
<div class="abs" style="left:0;top:0;width:28px;height:18px;background:linear-gradient(#dce9f7 0,#c4d6ea 45%,#aabfd8 50%,#bdd0e6 100%);border-right:1px solid #6b7a90"></div>
<div class="abs" style="left:28px;top:0;width:27px;height:18px;background:linear-gradient(#dce9f7 0,#c4d6ea 45%,#aabfd8 50%,#bdd0e6 100%);border-right:1px solid #6b7a90"></div>
<div class="abs" style="left:55px;top:0;width:47px;height:18px;background:linear-gradient(#eeb3a6 0,#dd8a78 45%,#c8452d 50%,#d36a4c 85%,#e39a7c 100%)"></div>
</div>
<div class="abs" style="left:1010px;top:107px;width:12px;height:5px;border:1px solid #8b9bb0;border-radius:1px;background:#c6d3e3"></div>
<div class="abs" style="left:1037px;top:102px;width:12px;height:10px;border:1px solid #4c5a6e;border-radius:1px;background:#fff;box-shadow:inset 0 0 0 2px #f4f7fb,inset 0 0 0 3px #4c5a6e"></div>
<svg style="left:1070px;top:98px" width="24" height="18" viewBox="0 0 24 18"><text x="11" y="13.4" text-anchor="middle" font-family="Liberation Sans, sans-serif" font-weight="bold" font-size="16.5" fill="#fff" stroke="#55404c" stroke-width="1.9" paint-order="stroke" textLength="11.4" lengthAdjust="spacingAndGlyphs">x</text></svg>
<div class="abs" style="left:296px;top:126px;width:808px;height:670px;background:#f0f0f0;border:1px solid #3a424d;box-shadow:0 0 0 1px rgba(255,255,255,.6)"></div>
<div class="grp" style="left:303px;top:137px;width:137px;height:172px"></div>
<div class="gl" style="left:308px;top:131px">Слой</div>
<div class="grp" style="left:303px;top:329px;width:137px;height:98px"></div>
<div class="gl" style="left:308px;top:323px">Special layer</div>
<div class="grp" style="left:303px;top:449px;width:137px;height:168px"></div>
<div class="gl" style="left:308px;top:443px">Options</div>
<div class="grp" style="left:303px;top:641px;width:137px;height:76px"></div>
<div class="gl" style="left:308px;top:635px">Scaling</div>
<div class="grp" style="left:303px;top:735px;width:137px;height:52px"></div>
<div class="gl" style="left:308px;top:729px">Orientation</div>
<div class="cb dis" style="left:313px;top:150px"></div>
<div class="dl g" style="left:329px;top:150px">C1</div>
<div class="cb" style="left:313px;top:166px"></div>
<div class="dl" style="left:329px;top:166px">S1</div>
<div class="cb" style="left:313px;top:182px"><svg style="left:0;top:0" width="11" height="11" viewBox="0 0 11 11"><path d="M2.2 5.2 L4.3 8.8 L8.9 1.6" fill="none" stroke="#3d5190" stroke-width="1.7" stroke-linejoin="round"/></svg></div>
<div class="dl" style="left:329px;top:182px">C2</div>
<div class="cb dis" style="left:313px;top:198px"></div>
<div class="dl g" style="left:329px;top:198px">S2</div>
<div class="cb dis" style="left:313px;top:214px"></div>
<div class="dl g" style="left:329px;top:214px">I1</div>
<div class="cb dis" style="left:313px;top:230px"></div>
<div class="dl g" style="left:329px;top:230px">I2</div>
<div class="cb" style="left:313px;top:246px"></div>
<div class="dl" style="left:329px;top:246px">O</div>
<div class="sw" style="left:415px;top:166px;background:#ff0000"></div>
<div class="sw" style="left:415px;top:182px;background:#000"></div>
<div class="sw" style="left:415px;top:246px;background:#00ff00"></div>
<div class="btn prs" style="left:312px;top:274px;width:29px;height:27px"></div>
<div class="btn" style="left:342px;top:274px;width:29px;height:27px"></div>
<div class="btn" style="left:372px;top:274px;width:29px;height:27px"></div>
<div class="btn" style="left:402px;top:274px;width:29px;height:27px"></div>
<svg style="left:0;top:0" width="440" height="305" viewBox="0 0 440 305" font-family="Liberation Sans, sans-serif" font-weight="bold" font-size="9.5" text-anchor="middle">
<g opacity=".75">
<rect x="326.4" y="284.4" width="8.6" height="9.2" fill="#fff" stroke="#808080" stroke-width="1.3"/><text x="330.7" y="292.29999999999995" fill="#808080">2</text>
</g>
<rect x="320.4" y="280.6" width="8.6" height="9.2" fill="#fff" stroke="#000" stroke-width="1.3"/><text x="324.7" y="288.5" fill="#000">1</text>
<g>
<rect x="355.8" y="284.4" width="8.6" height="9.2" fill="#fff" stroke="#8a8a8a" stroke-width="1.3"/><text x="360.1" y="292.29999999999995" fill="#8a8a8a">1</text>
</g>
<rect x="349.4" y="280.6" width="8.6" height="9.2" fill="#fff" stroke="#000" stroke-width="1.3"/><text x="353.7" y="288.5" fill="#000">2</text>
<rect x="382.2" y="276.6" width="8.2" height="8.6" fill="#fff" stroke="#000" stroke-width="1.3"/><text x="386.3" y="283.90000000000003" fill="#000">1</text>
<rect x="382.2" y="289.9" width="8.2" height="8.6" fill="#fff" stroke="#000" stroke-width="1.3"/><text x="386.3" y="297.2" fill="#000">2</text>
<path d="M377 287.5 H396" stroke="#000" stroke-width="1" stroke-dasharray="1 1"/>
<rect x="406.5" y="282.7" width="8.2" height="8.8" fill="#fff" stroke="#000" stroke-width="1.3"/><text x="410.6" y="290.2" fill="#000">1</text>
<rect x="418.6" y="282.7" width="8.2" height="8.8" fill="#fff" stroke="#000" stroke-width="1.3"/><text x="422.70000000000005" y="290.2" fill="#000">2</text>
<path d="M416.6 278 V297.4" stroke="#000" stroke-width="1" stroke-dasharray="1 1"/>
</svg>

<div class="cb dis" style="left:313px;top:342px"></div>
<div class="dl g" style="left:329px;top:342px">Soldermask 1</div>
<div class="cb" style="left:313px;top:358px"></div>
<div class="dl" style="left:329px;top:358px">Soldermask 2</div>
<div class="cb" style="left:313px;top:374px"></div>
<div class="dl" style="left:329px;top:374px">Drillings</div>
<div class="sw" style="left:415px;top:358px;background:#000"></div>
<div class="sw" style="left:415px;top:374px;background:#000"></div>
<div class="btn" style="left:314px;top:397px;width:115px;height:22px"><div class="t" style="left:0;width:113px;text-align:center;top:3px">Options...</div></div>
<div class="cb" style="left:313px;top:465px"></div>
<div class="dl" style="left:329px;top:465px">Black &amp; White</div>
<div class="cb" style="left:313px;top:483px"></div>
<div class="dl" style="left:329px;top:483px">Mirror</div>
<div class="cb" style="left:313px;top:501px"></div>
<div class="dl" style="left:329px;top:501px">Targets</div>
<div class="cb" style="left:313px;top:519px"></div>
<div class="dl" style="left:329px;top:519px">Board outline</div>
<div class="cb" style="left:313px;top:537px"></div>
<div class="dl" style="left:329px;top:537px">Шаблон</div>
<div class="cb" style="left:313px;top:555px"></div>
<div class="dl" style="left:329px;top:555px">Invert</div>
<div class="cb" style="left:313px;top:573px"><svg style="left:0;top:0" width="11" height="11" viewBox="0 0 11 11"><path d="M2.2 5.2 L4.3 8.8 L8.9 1.6" fill="none" stroke="#3d5190" stroke-width="1.7" stroke-linejoin="round"/></svg></div>
<div class="dl" style="left:329px;top:573px">Grid</div>
<div class="cb" style="left:313px;top:591px"></div>
<div class="dl" style="left:329px;top:591px">Info line</div>
<div class="rd on" style="left:309px;top:655px"></div><div class="dl" style="left:325px;top:654px">1:1</div>
<div class="rd" style="left:309px;top:671px"></div><div class="dl" style="left:325px;top:670px">Scale:</div>
<div class="dl g" style="left:400px;top:671px;width:31px;text-align:right;color:#a0a0a0">100%</div>
<div class="abs" style="left:310px;top:688px;width:122px;height:18px;background:linear-gradient(#e6e6e6,#f2f2f2);border-top:1px solid #7a7a7a;border-left:1px solid #9a9a9a;border-bottom:1px solid #fff"></div>
<svg style="left:310px;top:688px" width="122" height="18"><path d="M11 5.5 L7 9 L11 12.5Z" fill="#8a8a8a"/><path d="M111 5.5 L115 9 L111 12.5Z" fill="#6a6a6a"/></svg>
<div class="rd on" style="left:309px;top:750px"></div><div class="dl" style="left:325px;top:749px">Portrait</div>
<div class="rd" style="left:309px;top:766px"></div><div class="dl" style="left:325px;top:765px">Landscape</div>
<div class="btn" style="left:452px;top:136px;width:84px;height:25px"></div>
<div class="t" style="left:482px;top:142px">Center</div>
<div class="btn" style="left:538px;top:136px;width:112px;height:25px"></div>
<div class="t" style="left:584px;top:142px">Clipboard</div>
<div class="btn" style="left:652px;top:136px;width:82px;height:25px"></div>
<div class="t" style="left:682px;top:142px"><u>T</u>ile...</div>
<div class="btn" style="left:736px;top:136px;width:96px;height:25px"></div>
<div class="t" style="left:766px;top:142px"><u>C</u>alibrate...</div>
<div class="btn" style="left:834px;top:136px;width:74px;height:25px"></div>
<div class="t" style="left:864px;top:142px"><u>S</u>etup...</div>
<div class="btn hot" style="left:910px;top:136px;width:90px;height:25px"></div>
<div class="t" style="left:940px;top:142px"><u>П</u>ечать</div>
<div class="btn" style="left:1002px;top:136px;width:80px;height:25px"></div>
<div class="t" style="left:1029px;top:142px"><u>C</u>ancel</div>
<svg style="left:0;top:0" width="1128" height="200" viewBox="0 0 1128 200">
<rect x="460.6" y="141.6" width="14" height="14" fill="#fff" stroke="#000" stroke-width="1.3"/><path d="M467.6 142 V155.5 M461 148.6 H474.5" stroke="#000" stroke-width="1" stroke-dasharray="1 1"/>
<path d="M562.4 142.4 H567.4 L569.8 144.8 V151.4 H562.4 Z" fill="#fff" stroke="#000" stroke-width="1"/><path d="M563.6 145 h3.4 M563.6 147 h4.6 M563.6 149 h4.6" stroke="#000" stroke-width=".8"/>
<path d="M568.8 145.5 H573.8 L576.6 148.2 V154.6 H568.8 Z" fill="#fff" stroke="#000080" stroke-width="1.1"/><path d="M570.2 149.4 h4.6 M570.2 151.2 h5 M570.2 153 h5" stroke="#000080" stroke-width=".8"/>
<rect x="659" y="140.2" width="19" height="16" fill="#fff" stroke="#b0b0b0" stroke-width="1"/><path d="M665.3 140.2 V156.2 M671.6 140.2 V156.2 M659 148.2 H678" stroke="#b0b0b0" stroke-width="1"/>
<g font-family="Liberation Sans, sans-serif" font-weight="bold" font-size="7.6" fill="#0000ff" text-anchor="middle"><text x="662.3" y="147.2">1</text><text x="668.5" y="147.2">2</text><text x="674.8" y="147.2">3</text><text x="662.3" y="155.2">4</text><text x="668.5" y="155.2">5</text><text x="674.8" y="155.2">6</text></g>
<rect x="747.4" y="139.4" width="6" height="19.4" fill="#fff" stroke="#000" stroke-width="1.2"/><path d="M751 142 h2 M751 145 h2 M751 148 h2 M751 151 h2 M751 154 h2" stroke="#999" stroke-width=".8"/><path d="M750 139.5 V158.6" stroke="#bbb" stroke-width=".8"/>
<g font-family="Liberation Sans, sans-serif" font-weight="bold" font-size="6.5" fill="#0000ff"><text x="742.6" y="145">0</text><text x="742.6" y="153.4">2</text><text x="742.6" y="160.5">&gt;</text></g>
<path d="M757.6 144.6 V153.2" stroke="#000" stroke-width="1.1"/><path d="M755.6 146.4 L757.6 143.8 L759.6 146.4 Z M755.6 151.6 L757.6 154 L759.6 151.6 Z" fill="#000"/>
<g fill="none" stroke-linecap="round"><path d="M844 145.4 H853.4 M858.3 143.2 A2.7 2.5 0 1 0 858.3 147.6" stroke="#1a0505" stroke-width="3.3"/><path d="M844 145.4 H853.4 M858.3 143.2 A2.7 2.5 0 1 0 858.3 147.6" stroke="#00ffff" stroke-width="1.4"/></g>
<path d="M841.8 150.7 L844.6 148.3 H857.6 V152.8 L854.8 155.4 H842.4 Q841 155.4 841 153.2 Q841 151 841.8 150.7 Z" fill="#f6f6f6" stroke="#000" stroke-width="1.2" stroke-linejoin="round"/><path d="M842 150.8 H854.8 L857.4 148.5 M854.8 150.8 V155.2" fill="none" stroke="#000" stroke-width="1"/><path d="M855.4 151.4 L857 150 V152.6 L855.4 154.2 Z" fill="#b0b0b0"/><rect x="843" y="152" width="2.1" height="1.1" fill="#ff0000"/>
<path d="M921 148 L923.4 142.6 H931.4 L930 148 Z" fill="#fff" stroke="#000" stroke-width="1"/><path d="M924 144.6 h5.6 M923.4 146.2 h5.6" stroke="#999" stroke-width=".8"/>
<path d="M918.2 150 L920.4 147.8 H931 L933.8 150 V153.6 L931.4 156 H918.2 Z" fill="#2a2a2a" stroke="#000" stroke-width="1"/><path d="M918.4 151 H931.4 L933.6 149" stroke="#666" stroke-width=".9" fill="none"/><rect x="919.4" y="153" width="11" height="1.6" fill="#777"/><rect x="925.6" y="151.4" width="1.8" height="1.5" fill="#ffff00"/><path d="M931.4 156 V151" stroke="#555" stroke-width=".8"/>
<rect x="1014.4" y="140.2" width="5.4" height="2.2" fill="#00d000" stroke="#003000" stroke-width=".8"/>
<rect x="1012.8" y="144.6" width="3.8" height="12" fill="#e000e0"/><rect x="1017.2" y="144.6" width="4.6" height="12" fill="#b8ffff"/><path d="M1017.6 145.5 V156" stroke="#00d8e8" stroke-width="1" stroke-dasharray="1 1"/><path d="M1019.6 146 V156" stroke="#00d8e8" stroke-width="1" stroke-dasharray="1 1"/><path d="M1016.6 157 L1017.8 150 L1020.8 150 L1022 157 Z" fill="#fff" opacity=".7"/>
<path d="M1012.2 156.8 V144 H1022.4 V156.8" fill="none" stroke="#000090" stroke-width="1.2"/><path d="M1016.9 144 V156.8" stroke="#000090" stroke-width="1"/><path d="M1008 156.8 H1026" stroke="#000090" stroke-width="1.4"/><path d="M1014 157.4 L1016.8 155.6 V157.4 Z" fill="#333"/>
</svg>

<div class="abs" style="left:450px;top:168px;width:649px;height:622px;border-top:1px solid #a0a0a0;border-left:1px solid #a0a0a0;border-right:1px solid #fff;border-bottom:1px solid #fff;background:#f0f0f0"></div>
<div class="btn" style="left:1081px;top:170px;width:16px;height:16px;border-color:#555"><div class="t" style="left:0;top:0;width:14px;text-align:center;font-weight:bold;font-size:12px;line-height:14px">?</div></div>
<div class="abs" style="left:574px;top:193px;width:417px;height:590px;background:#000"></div>
<div class="abs" style="left:571px;top:190px;width:417px;height:589px;background:#fff"></div>
<svg style="left:0;top:0" width="1128" height="825" viewBox="0 0 1128 825" shape-rendering="crispEdges"><rect x="555" y="189" width="433" height="1" fill="#000"/><rect x="570" y="175" width="1" height="605" fill="#000"/><rect x="987" y="189" width="1" height="591" fill="#000"/><rect x="570" y="779" width="418" height="1" fill="#000"/><rect x="570" y="175" width="1" height="14" fill="#000"/><rect x="590" y="186" width="1" height="3" fill="#000"/><rect x="610" y="186" width="1" height="3" fill="#000"/><rect x="630" y="186" width="1" height="3" fill="#000"/><rect x="650" y="186" width="1" height="3" fill="#000"/><rect x="670" y="175" width="1" height="14" fill="#000"/><rect x="689" y="186" width="1" height="3" fill="#000"/><rect x="709" y="186" width="1" height="3" fill="#000"/><rect x="729" y="186" width="1" height="3" fill="#000"/><rect x="749" y="186" width="1" height="3" fill="#000"/><rect x="769" y="175" width="1" height="14" fill="#000"/><rect x="789" y="186" width="1" height="3" fill="#000"/><rect x="809" y="186" width="1" height="3" fill="#000"/><rect x="829" y="186" width="1" height="3" fill="#000"/><rect x="849" y="186" width="1" height="3" fill="#000"/><rect x="869" y="175" width="1" height="14" fill="#000"/><rect x="888" y="186" width="1" height="3" fill="#000"/><rect x="908" y="186" width="1" height="3" fill="#000"/><rect x="928" y="186" width="1" height="3" fill="#000"/><rect x="948" y="186" width="1" height="3" fill="#000"/><rect x="968" y="175" width="1" height="14" fill="#000"/><rect x="555" y="189" width="15" height="1" fill="#000"/><rect x="567" y="209" width="3" height="1" fill="#000"/><rect x="567" y="229" width="3" height="1" fill="#000"/><rect x="567" y="249" width="3" height="1" fill="#000"/><rect x="567" y="269" width="3" height="1" fill="#000"/><rect x="555" y="289" width="15" height="1" fill="#000"/><rect x="567" y="308" width="3" height="1" fill="#000"/><rect x="567" y="328" width="3" height="1" fill="#000"/><rect x="567" y="348" width="3" height="1" fill="#000"/><rect x="567" y="368" width="3" height="1" fill="#000"/><rect x="555" y="388" width="15" height="1" fill="#000"/><rect x="567" y="408" width="3" height="1" fill="#000"/><rect x="567" y="428" width="3" height="1" fill="#000"/><rect x="567" y="448" width="3" height="1" fill="#000"/><rect x="567" y="468" width="3" height="1" fill="#000"/><rect x="555" y="488" width="15" height="1" fill="#000"/><rect x="567" y="507" width="3" height="1" fill="#000"/><rect x="567" y="527" width="3" height="1" fill="#000"/><rect x="567" y="547" width="3" height="1" fill="#000"/><rect x="567" y="567" width="3" height="1" fill="#000"/><rect x="555" y="587" width="15" height="1" fill="#000"/><rect x="567" y="607" width="3" height="1" fill="#000"/><rect x="567" y="627" width="3" height="1" fill="#000"/><rect x="567" y="647" width="3" height="1" fill="#000"/><rect x="567" y="667" width="3" height="1" fill="#000"/><rect x="555" y="687" width="15" height="1" fill="#000"/><rect x="567" y="706" width="3" height="1" fill="#000"/><rect x="567" y="726" width="3" height="1" fill="#000"/><rect x="567" y="746" width="3" height="1" fill="#000"/><rect x="567" y="766" width="3" height="1" fill="#000"/><rect x="678" y="197" width="1" height="573" fill="#c0c0c0"/><rect x="779" y="197" width="1" height="573" fill="#c0c0c0"/><rect x="880" y="197" width="1" height="573" fill="#c0c0c0"/><rect x="578" y="340" width="402" height="1" fill="#c0c0c0"/><rect x="578" y="483" width="402" height="1" fill="#c0c0c0"/><rect x="578" y="627" width="402" height="1" fill="#c0c0c0"/><g stroke="#ff0000" stroke-width="1" stroke-dasharray="3 3" fill="none"><path d="M578 197.5 H980" stroke-dashoffset="3"/><path d="M578 769.5 H980" stroke-dashoffset="1"/><path d="M578.5 197 V770" stroke-dashoffset="5"/><path d="M979.5 197 V770" stroke-dashoffset="0"/></g></svg>
<div class="t" style="left:572px;top:175px;font-size:9.4px;letter-spacing:-.5px;line-height:13px">0</div>
<div class="t" style="left:672px;top:175px;font-size:9.4px;letter-spacing:-.5px;line-height:13px">50</div>
<div class="t" style="left:771px;top:175px;font-size:9.4px;letter-spacing:-.5px;line-height:13px">100</div>
<div class="t" style="left:871px;top:175px;font-size:9.4px;letter-spacing:-.5px;line-height:13px">150</div>
<div class="t" style="left:970px;top:175px;font-size:9.4px;letter-spacing:-.5px;line-height:13px">200</div>
<div class="t" style="left:540px;width:28px;text-align:right;top:190px;font-size:9.4px;letter-spacing:-.5px;line-height:13px">0</div>
<div class="t" style="left:540px;width:28px;text-align:right;top:290px;font-size:9.4px;letter-spacing:-.5px;line-height:13px">50</div>
<div class="t" style="left:540px;width:28px;text-align:right;top:390px;font-size:9.4px;letter-spacing:-.5px;line-height:13px">100</div>
<div class="t" style="left:540px;width:28px;text-align:right;top:489px;font-size:9.4px;letter-spacing:-.5px;line-height:13px">150</div>
<div class="t" style="left:540px;width:28px;text-align:right;top:589px;font-size:9.4px;letter-spacing:-.5px;line-height:13px">200</div>
<div class="t" style="left:540px;width:28px;text-align:right;top:688px;font-size:9.4px;letter-spacing:-.5px;line-height:13px">250</div>
<svg style="left:0;top:0" width="1128" height="825" viewBox="0 0 1128 825">
<g transform="translate(700,660) scale(0.13333)">
<path d="M150 672 V200 L190 158 H920 L960 198 V672 Z" fill="#000"/>
<path d="M164 645 V205 L196 172 H425 L470 225 L510 230 L560 228 L585 185 L600 172 H860 L880 215 L935 255 L946 300 V645 H300 L290 615 H164 Z" fill="#fff"/>
<path d="M164 615 H235 L240 645 H164 Z" fill="#000"/>
<path d="M150 368 L186 395 L150 422 Z" fill="#000"/>
<path d="M930 290 H965 V318 H930 Z" fill="#000"/>
<g fill="none" stroke="#000" stroke-width="15" stroke-linecap="round" stroke-linejoin="round">
<path d="M210 208 H285 L340 265 H370"/>
<path d="M362 208 L400 250 V300"/>
<path d="M210 208 V275 L175 285 L165 300 V340 L180 350 H440 L462 335 V322 L440 310 H200"/>
<path d="M440 265 H560 L600 310 H660 L690 280 V240 L720 210 H750"/>
<path d="M515 265 V380 L535 395"/>
<path d="M630 210 V265"/>
<path d="M825 210 V260"/>
<path d="M745 255 V300"/>
<path d="M580 345 L590 400 L630 425"/>
<path d="M625 350 H750 V395"/>
<path d="M690 380 V435 H770 L860 345"/>
<path d="M860 300 H910 V390 L870 395 L860 430 L830 440 V600 L860 620"/>
<path d="M400 380 V530 L440 550"/>
<path d="M400 380 H415"/>
<path d="M345 365 V410"/>
<path d="M230 410 L265 430 L285 475"/>
<path d="M180 440 L215 470 L245 475"/>
<path d="M440 515 H480 L485 440 H560 L600 470 H830"/>
<path d="M540 500 L570 510 L590 580"/>
<path d="M635 505 L645 530 L690 545 H760"/>
<path d="M690 530 V590"/>
<path d="M440 630 L480 615 L490 560 L540 550"/>
<path d="M240 590 L250 560 L300 548 L350 560 L360 600 L330 630"/>
<path d="M290 585 H330"/>
<path d="M295 600 V640"/>
<path d="M180 515 V590"/>
<path d="M830 510 H860"/>
<path d="M830 545 H860"/>
<path d="M830 580 H860"/>
<path d="M740 580 L760 650"/>
<path d="M790 490 V520 L810 530 V560 L790 570 V600 L810 620"/>
<path d="M200 310 H420 M200 350 H410" stroke-width="18"/>
<path d="M575 615 H720 L750 585" stroke-width="22"/>
<path d="M905 475 V505 M905 585 V615" stroke-width="26"/>
</g>
<g fill="#000">
<circle cx="630" cy="210" r="18"/>
<circle cx="630" cy="265" r="13"/>
<circle cx="750" cy="210" r="17"/>
<circle cx="825" cy="210" r="17"/>
<circle cx="825" cy="260" r="12"/>
<circle cx="440" cy="475" r="13"/>
<circle cx="440" cy="550" r="13"/>
<circle cx="440" cy="590" r="13"/>
<circle cx="440" cy="630" r="12"/>
<circle cx="590" cy="580" r="17"/>
<circle cx="860" cy="470" r="12"/>
<circle cx="860" cy="510" r="12"/>
<circle cx="860" cy="545" r="12"/>
<circle cx="860" cy="580" r="12"/>
<circle cx="860" cy="620" r="12"/>
<circle cx="515" cy="265" r="12"/>
<circle cx="750" cy="350" r="12"/>
<circle cx="750" cy="395" r="12"/>
<circle cx="690" cy="435" r="12"/>
<circle cx="690" cy="545" r="13"/>
<circle cx="690" cy="590" r="11"/>
<circle cx="750" cy="470" r="11"/>
<circle cx="750" cy="505" r="11"/>
<circle cx="860" cy="345" r="12"/>
<circle cx="860" cy="300" r="12"/>
<circle cx="330" cy="630" r="12"/>
<circle cx="290" cy="585" r="11"/>
<circle cx="240" cy="590" r="11"/>
<circle cx="635" cy="505" r="10"/>
<circle cx="540" cy="500" r="10"/>
<circle cx="400" cy="380" r="11"/>
<circle cx="345" cy="410" r="10"/>
<circle cx="625" cy="350" r="10"/>
<circle cx="580" cy="345" r="10"/>
<rect x="318" y="463" width="26" height="24"/>
</g>
<g fill="#fff" stroke="#000" stroke-width="9">
<circle cx="210" cy="208" r="9"/>
<circle cx="285" cy="208" r="9"/>
<circle cx="362" cy="208" r="9"/>
<circle cx="370" cy="265" r="9"/>
<circle cx="440" cy="265" r="9"/>
<circle cx="285" cy="310" r="9"/>
<circle cx="285" cy="350" r="9"/>
<circle cx="745" cy="255" r="9"/>
<circle cx="820" cy="262" r="9"/>
<circle cx="230" cy="410" r="9"/>
<circle cx="180" cy="440" r="9"/>
<circle cx="345" cy="410" r="9"/>
<circle cx="180" cy="515" r="9"/>
<circle cx="180" cy="550" r="9"/>
<circle cx="235" cy="628" r="9"/>
</g>
<path d="M905 478 V502 M905 588 V612" stroke="#fff" stroke-width="8" stroke-linecap="round"/>
</g>
</svg>

<div class="t" style="left:761px;top:766px;font-size:51px;line-height:60px;color:rgba(255,128,32,.115);-webkit-text-stroke:1px rgba(120,80,50,.16);letter-spacing:-2.4px">RADIOSKOT.RU</div>
</body>
</html>
